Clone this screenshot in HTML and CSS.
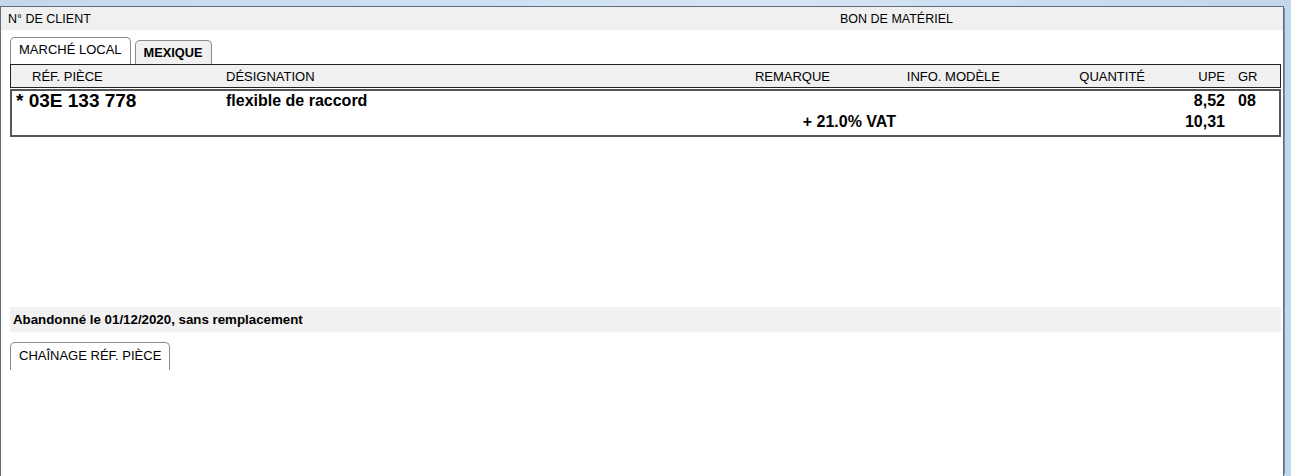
FILE: index.html
```html
<!DOCTYPE html>
<html lang="fr">
<head>
    <meta charset="UTF-8">
    <title>Bon de matériel</title>
    <link rel="stylesheet" href="styles.css">
</head>
<body>
    <div class="window">
        <div class="topbar">
            <span class="client">N° DE CLIENT</span>
            <span class="title">BON DE MATÉRIEL</span>
        </div>

        <div class="tabs">
            <div class="tab active">MARCHÉ LOCAL</div>
            <div class="tab">MEXIQUE</div>
        </div>

        <div class="grid-head">
            <span class="c-ref">RÉF. PIÈCE</span>
            <span class="c-des">DÉSIGNATION</span>
            <span class="c-rem">REMARQUE</span>
            <span class="c-info">INFO. MODÈLE</span>
            <span class="c-qty">QUANTITÉ</span>
            <span class="c-upe">UPE</span>
            <span class="c-gr">GR</span>
        </div>

        <div class="grid-body">
            <div class="row">
                <span class="c-ref part">* 03E 133 778</span>
                <span class="c-des">flexible de raccord</span>
                <span class="c-rem"></span>
                <span class="c-info"></span>
                <span class="c-qty"></span>
                <span class="c-upe">8,52</span>
                <span class="c-gr">08</span>
            </div>
            <div class="row">
                <span class="c-ref"></span>
                <span class="c-des"></span>
                <span class="c-vat">+ 21.0% VAT</span>
                <span class="c-tot">10,31</span>
                <span class="c-gr"></span>
            </div>
        </div>

        <div class="status">Abandonné le 01/12/2020, sans remplacement</div>

        <div class="tabs tabs-low">
            <div class="tab active">CHAÎNAGE RÉF. PIÈCE</div>
        </div>
    </div>
</body>
</html>
```

FILE: styles.css
```css
body {
    margin: 0;
    height: 476px;
    overflow: hidden;
    font-family: "Liberation Sans", Arial, sans-serif;
    font-size: 12.5px;
    color: #000;
    background: linear-gradient(to right, #c4d8ee, #d6e5f5 60%, #c2d6ec);
}

.window {
    margin: 6px 7px 0 0;
    height: 470px;
    box-sizing: border-box;
    background-color: #fff;
    border: 1px solid #5f6d7c;
    border-bottom: none;
    box-shadow: 3px 0 0 -2px #7a8da3;
}

.topbar {
    display: flex;
    height: 23px;
    align-items: center;
    padding-left: 7px;
    background-color: #f0f0f0;
}

.topbar .client {
    width: 832px;
}

.tabs {
    display: flex;
    align-items: flex-end;
    gap: 4px;
    height: 34px;
    padding-left: 9px;
}

.tab {
    height: 23px;
    padding: 0 8px;
    line-height: 24px;
    border: 1px solid #8a8a8a;
    border-bottom: none;
    border-radius: 5px 5px 0 0;
    background-color: #f0f0f0;
    font-weight: bold;
    font-size: 12.8px;
}

.tab.active {
    height: 26px;
    line-height: 24px;
    background-color: #fff;
    font-weight: normal;
    font-size: 13px;
}

.grid-head,
.row {
    display: flex;
    align-items: center;
}

.grid-head span,
.row span {
    box-sizing: border-box;
    flex: none;
}

.grid-head {
    margin: 0 2px 0 9px;
    height: 22px;
    border: 1px solid #222;
    background-color: #f0f0f0;
    font-size: 13px;
}

.grid-body {
    margin: 1px 2px 0 9px;
    height: 44px;
    border: 2px solid #555;
    font-weight: bold;
    font-size: 16px;
}

.row {
    height: 21px;
}

.row:first-child {
    height: 20px;
}

.c-ref { width: 215px; padding-left: 21px; }
.c-des { width: 420px; }
.c-rem { width: 184px; text-align: right; }
.c-info { width: 170px; text-align: right; }
.c-qty { width: 145px; text-align: right; }
.c-upe { width: 80px; text-align: right; }
.c-gr { width: 40px; padding-left: 13px; }

.grid-body .c-ref { width: 214px; padding-left: 4px; }
.c-vat { width: 250px; text-align: right; }
.c-tot { width: 329px; text-align: right; }

.part {
    font-size: 19px;
}

.status {
    margin: 170px 2px 0 9px;
    height: 25px;
    line-height: 26px;
    padding-left: 3px;
    background-color: #f1f1f1;
    font-weight: bold;
    font-size: 13.3px;
}

.tabs-low {
    height: 38px;
}

.tabs-low .tab.active {
    height: 27px;
    line-height: 26px;
}
```
